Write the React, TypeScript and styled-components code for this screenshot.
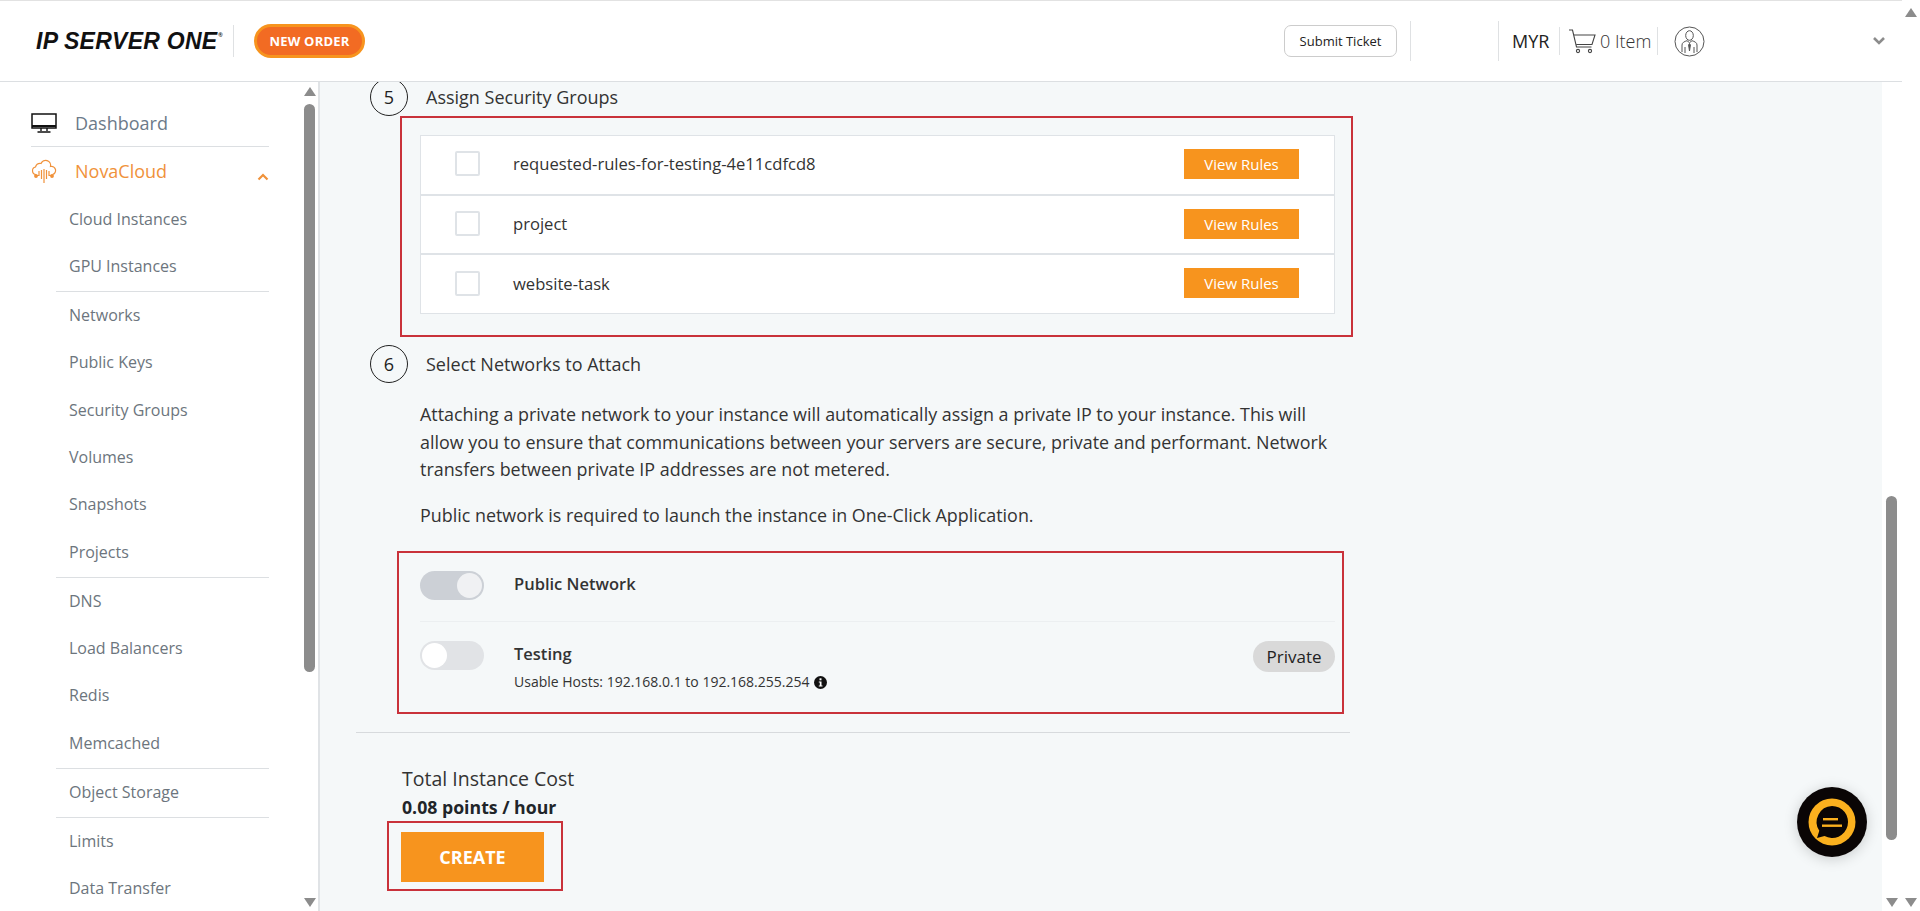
import React from 'react';
import styled, {createGlobalStyle} from 'styled-components';

const Global=createGlobalStyle`
  html,body{margin:0;padding:0;height:100%;overflow:hidden;}
  body{font-family:"Open Sans","Liberation Sans",sans-serif;color:#212529;background:#fff;}
  *{box-sizing:border-box;}
`
const Page=styled.div`
  width:1920px;height:911px;display:flex;overflow:hidden;background:#fff;
`
const Frame=styled.div`
  width:1902px;display:flex;flex-direction:column;
`
const Header=styled.header`
  height:82px;flex:none;display:flex;align-items:center;background:#fff;
  border-top:1px solid #e2e2e2;border-bottom:1px solid #dcdfe2;
  padding-left:36px;
`
const Logo=styled.div`
  width:187px;display:flex;align-items:flex-start;
  font-family:"Liberation Sans",sans-serif;font-weight:700;font-style:italic;
  font-size:23px;line-height:20px;letter-spacing:.25px;color:#111;white-space:nowrap;
  >sup{font-size:6px;line-height:8px;margin:0 0 0 1px;font-style:normal;}
`
const HeadSep=styled.div<{$h:number;$ml:number}>`
  width:1px;height:${p=>p.$h}px;background:#dfe1e3;flex:none;margin-left:${p=>p.$ml}px;
`
const NewOrder=styled.button`
  width:111px;height:34px;margin-left:20px;border:3px solid #f7941e;border-radius:17px;
  background:#f26b23;color:#fff;font:700 13px "Open Sans",sans-serif;padding:0;letter-spacing:.2px;
`
const Spacer=styled.div`flex:1;`
const Ticket=styled.button`
  width:113px;height:32px;border:1px solid #ccc;border-radius:7px;background:#fff;
  color:#222;font:500 13px "Open Sans",sans-serif;padding:0;
`
const Currency=styled.span`
  margin-left:13px;font-size:18px;color:#222;width:47px;
`
const Items=styled.span`
  margin-left:3px;font-size:18px;font-weight:300;color:#333;width:57px;
`
const CartBox=styled.span`
  display:flex;margin-left:8px;
`
const UserBox=styled.span`
  display:flex;margin-left:16px;width:198px;
`
const Chevron=styled.svg`
  width:14px;height:10px;margin-right:16px;flex:none;
`
const Body=styled.div`
  flex:1;display:flex;min-height:0;
`
const Sidebar=styled.aside`
  width:320px;flex:none;display:flex;background:#fff;border-right:2px solid #e0e3e6;overflow:hidden;
`
const Nav=styled.nav`
  width:238px;margin-left:31px;flex:none;padding-top:18px;
`
const TopItem=styled.div<{$active?:boolean}>`
  height:47px;display:flex;align-items:center;font-size:18px;
  color:${p=>p.$active?'#f0923b':'#6c7a89'};
  border-bottom:${p=>p.$active?'none':'1px solid #dcdfe2'};
  >svg{flex:none;width:26px;}
  >span{margin-left:18px;flex:1;}
`
const Caret=styled.svg`
  &&{width:12px;height:8px;margin:12px 0 0 0;}
`
const SubList=styled.ul`
  list-style:none;margin:0;padding:1.5px 0 0 25px;
`
const SubItem=styled.li<{$line?:boolean}>`
  height:${p=>p.$line?48.9:47.4}px;padding-left:13px;line-height:47.4px;font-size:16px;color:#6c757d;
  ${p=>p.$line?'border-bottom:1px solid #dcdfe2;':''}
`
const Rail=styled.div`
  width:18px;flex:none;display:flex;flex-direction:column;align-items:center;padding:8px 0 4px;
`
const SideRail=styled(Rail)`
  width:13px;margin-left:34px;padding:5px 0 4px;
`
const MainRail=styled(Rail)`
  width:20px;padding:0 0 4px 4px;align-items:flex-start;
`
const Thumb=styled.div<{$h:number;$mt:number}>`
  width:11px;height:${p=>p.$h}px;margin:${p=>p.$mt}px 0 0 0;background:#8c8c8c;border-radius:6px;flex:none;
`
const ArrowUp=styled.div`
  width:0;height:0;flex:none;border-left:6px solid transparent;border-right:6px solid transparent;border-bottom:9px solid #8c8c8c;
`
const ArrowDown=styled.div`
  width:0;height:0;flex:none;border-left:6px solid transparent;border-right:6px solid transparent;border-top:9px solid #8c8c8c;
`
const PushDown=styled.div`flex:1;`
const Main=styled.main`
  flex:1;background:#f5f8f9;overflow:hidden;display:flex;flex-direction:column;padding-left:36px;position:relative;
`
const Column=styled.div`
  width:994px;margin-top:-4px;display:flex;flex-direction:column;
`
const StepHead=styled.div`
  display:flex;align-items:center;margin-left:14px;height:38px;
`
const StepNum=styled.div`
  width:38px;height:38px;border:1px solid #222;border-radius:50%;display:flex;align-items:center;justify-content:center;
  font-size:18px;color:#222;flex:none;
`
const StepTitle=styled.h3`
  margin:0 0 0 18px;font-size:18px;font-weight:400;color:#333;
`
const Marked=styled.div`
  border:2px solid #c9323b;
`
const GroupsBox=styled(Marked)`
  width:953px;height:221px;margin:0 0 0 44px;padding:17px 18px 0 18px;
`
const GroupList=styled.div`
  width:915px;height:179px;background:#fff;border:1px solid #dfe3e7;display:flex;flex-direction:column;
`
const GroupRow=styled.div`
  flex:1;display:flex;align-items:center;padding:0 35px 2px 34px;border-bottom:2px solid #dfe3e7;
  &:last-child{border-bottom:none;}
`
const Check=styled.span`
  width:25px;height:25px;flex:none;background:#fff;border:2px solid #dfe3e7;border-radius:2px;
`
const GroupName=styled.span`
  flex:1;margin-left:33px;font-size:16.6px;color:#333;
`
const RulesBtn=styled.button`
  width:115px;height:30px;background:#f7941e;border:none;color:#fff;font:400 15px "Open Sans",sans-serif;padding:0;
`
const Section6=styled(StepHead)`
  margin-top:8px;
`
const Para=styled.p`
  margin:0 0 0 64px;width:920px;font-size:17.9px;line-height:27.5px;color:#333;
`
const Intro=styled(Para)`
  margin-top:18px;
`
const Note=styled(Para)`
  margin-top:18px;
`
const NetworkBox=styled(Marked)`
  width:947px;height:163px;margin:22px 0 0 41px;padding:0 7px 0 21px;display:flex;flex-direction:column;
`
const NetRow=styled.div<{$first?:boolean}>`
  height:${p=>p.$first?69:90}px;flex:none;display:flex;align-items:flex-start;padding-top:${p=>p.$first?18:19}px;
  ${p=>p.$first?'border-bottom:1px solid #eceff1;':''}
`
const Toggle=styled.div<{$on?:boolean}>`
  width:64px;height:29px;border-radius:15px;padding:2px;flex:none;display:flex;
  background:${p=>p.$on?'#ccd0d6':'#e1e3e6'};
  justify-content:${p=>p.$on?'flex-end':'flex-start'};
  >i{display:block;width:25px;height:25px;border-radius:50%;background:${p=>p.$on?'#f0f1f3':'#fff'};}
`
const NetInfo=styled.div`
  margin-left:30px;flex:1;
`
const NetName=styled.div`
  font-size:16.5px;font-weight:600;line-height:26px;color:#333;
`
const Hosts=styled.div`
  display:flex;align-items:center;gap:4px;font-size:14px;line-height:24px;color:#333;margin-top:3px;
`
const Pill=styled.span`
  width:82px;height:31px;flex:none;border-radius:16px;background:#d9d9d9;display:flex;align-items:center;justify-content:center;
  font-size:17px;font-weight:500;color:#222;
`
const Rule=styled.hr`
  width:994px;height:1px;margin:18px 0 0 0;border:none;background:#d7dadd;
`
const Cost=styled.div`
  margin:32px 0 0 46px;font-size:19.5px;line-height:28px;color:#333;
`
const Price=styled.div`
  margin-left:46px;font-size:17.7px;font-weight:700;line-height:28px;color:#212529;
`
const CreateBox=styled(Marked)`
  width:176px;height:70px;margin:0 0 0 31px;padding:9px 12px;
`
const CreateBtn=styled.button`
  width:143px;height:50px;background:#f7941e;border:none;color:#fff;font:700 18px "Open Sans",sans-serif;padding:0;
`
const Chat=styled.div`
  position:absolute;right:15px;bottom:54px;width:70px;height:70px;border-radius:50%;background:#0a0505;
  box-shadow:0 2px 14px rgba(0,0,0,.18);display:flex;align-items:center;justify-content:center;
`

const subs:[string,boolean?][]=[
  ['Cloud Instances'],['GPU Instances',true],['Networks'],['Public Keys'],['Security Groups'],['Volumes'],
  ['Snapshots'],['Projects',true],['DNS'],['Load Balancers'],['Redis'],['Memcached',true],
  ['Object Storage',true],['Limits'],['Data Transfer']
]
const groups=['requested-rules-for-testing-4e11cdfcd8','project','website-task']

function App() {
  return (
    <Page>
      <Global/>
      <Frame>
        <Header>
          <Logo>IP SERVER ONE<sup>®</sup></Logo>
          <HeadSep $h={32} $ml={10}/>
          <NewOrder>NEW ORDER</NewOrder>
          <Spacer/>
          <Ticket>Submit Ticket</Ticket>
          <HeadSep $h={40} $ml={13}/>
          <HeadSep $h={40} $ml={87}/>
          <Currency>MYR</Currency>
          <HeadSep $h={28} $ml={0}/>
          <CartBox>
            <svg width="29" height="28" viewBox="0 0 29 28" fill="none" stroke="#444" strokeWidth="1.1">
              <path d="M1 3h3.500l4 17h15"/>
              <path d="M6 8h21l-3 9.500H8.200"/>
              <circle cx="10" cy="24" r="1.600"/>
              <circle cx="22" cy="24" r="1.600"/>
            </svg>
          </CartBox>
          <Items>0 Item</Items>
          <HeadSep $h={28} $ml={0}/>
          <UserBox>
            <svg width="31" height="31" viewBox="0 0 31 31" fill="none" stroke="#555" strokeWidth="1">
              <circle cx="15.500" cy="15.500" r="14.500"/>
              <ellipse cx="15.500" cy="9.500" rx="3.800" ry="4.800"/>
              <path d="M8 26v-7c0-2.500 2.500-3.500 5-4.300l2.500 2 2.500-2c2.500.8 5 1.800 5 4.300v7"/>
              <path d="M11 27v-6M20 27v-6"/>
              <path d="M15.500 17.500l-.9 1.500.9 6 .9-6z" fill="#555"/>
            </svg>
          </UserBox>
          <Chevron viewBox="0 0 14 10"><path d="M2 2l5 5 5-5" fill="none" stroke="#8c8c8c" strokeWidth="2.600"/></Chevron>
        </Header>
        <Body>
          <Sidebar>
            <Nav>
              <TopItem>
                <svg height="20" viewBox="0 0 26 20" fill="none" stroke="#111">
                  <rect x="1" y="1" width="24" height="14" strokeWidth="1.500"/>
                  <path d="M1 13h24" strokeWidth="2"/>
                  <path d="M10 15v3M16 15v3M6.500 19h13" strokeWidth="1.400"/>
                </svg>
                <span>Dashboard</span>
              </TopItem>
              <TopItem $active>
                <svg height="26" viewBox="0 0 26 26" fill="none" stroke="#f0923b" strokeWidth="1.200">
                  <path d="M5 16.500A3.800 3.800 0 0 1 4.500 9 5 5 0 0 1 10 5.500a5 5 0 0 1 9.500 3 4 4 0 0 1 2 8"/>
                  <path d="M13 11v14M10.500 12v9M15.500 12v9M8 13v4.500H6M18 13v4.500h2"/>
                  <circle cx="5" cy="18" r="1.300" fill="#f0923b"/>
                  <circle cx="21" cy="18" r="1.300" fill="#f0923b"/>
                </svg>
                <span>NovaCloud</span>
                <Caret viewBox="0 0 12 8">
                  <path d="M1.500 6.500L6 2l4.500 4.500" fill="none" stroke="#f0923b" strokeWidth="2.200"/>
                </Caret>
              </TopItem>
              <SubList>
                {subs.map(([name,line])=>
                  <SubItem key={name} $line={line}>{name}</SubItem>
                )}
              </SubList>
            </Nav>
            <SideRail>
              <ArrowUp/>
              <Thumb $h={568} $mt={8}/>
              <PushDown/>
              <ArrowDown/>
            </SideRail>
          </Sidebar>
          <Main>
            <Column>
              <StepHead>
                <StepNum>5</StepNum>
                <StepTitle>Assign Security Groups</StepTitle>
              </StepHead>
              <GroupsBox>
                <GroupList>
                  {groups.map(g=>
                    <GroupRow key={g}>
                      <Check/>
                      <GroupName>{g}</GroupName>
                      <RulesBtn>View Rules</RulesBtn>
                    </GroupRow>
                  )}
                </GroupList>
              </GroupsBox>
              <Section6>
                <StepNum>6</StepNum>
                <StepTitle>Select Networks to Attach</StepTitle>
              </Section6>
              <Intro>Attaching a private network to your instance will automatically assign a private IP to your instance. This will allow you to ensure that communications between your servers are secure, private and performant. Network transfers between private IP addresses are not metered.</Intro>
              <Note>Public network is required to launch the instance in One-Click Application.</Note>
              <NetworkBox>
                <NetRow $first>
                  <Toggle $on><i/></Toggle>
                  <NetInfo><NetName>Public Network</NetName></NetInfo>
                </NetRow>
                <NetRow>
                  <Toggle><i/></Toggle>
                  <NetInfo>
                    <NetName>Testing</NetName>
                    <Hosts>
                      Usable Hosts: 192.168.0.1 to 192.168.255.254
                      <svg width="13" height="13" viewBox="0 0 13 13">
                        <circle cx="6.500" cy="6.500" r="6.500" fill="#111"/>
                        <rect x="5.500" y="2.300" width="2" height="2" fill="#fff"/>
                        <path d="M4.800 5.500h2.700v4h1v1H4.800v-1h1V6.500h-1z" fill="#fff"/>
                      </svg>
                    </Hosts>
                  </NetInfo>
                  <Pill>Private</Pill>
                </NetRow>
              </NetworkBox>
              <Rule/>
              <Cost>Total Instance Cost</Cost>
              <Price>0.08 points / hour</Price>
              <CreateBox><CreateBtn>CREATE</CreateBtn></CreateBox>
            </Column>
            <Chat>
              <svg width="48" height="48" viewBox="0 0 48 48">
                <circle cx="24" cy="24" r="23.500" fill="#fbb01e"/>
                <path d="M24 8a16 16 0 1 1-7.500 30.100L9 40l2.300-7.200A16 16 0 0 1 24 8z" fill="#0a0505"/>
                <rect x="15" y="20" width="15" height="2.400" fill="#fbb01e"/>
                <rect x="14" y="26.500" width="20" height="2.400" fill="#fbb01e"/>
              </svg>
            </Chat>
          </Main>
          <MainRail>
            <Thumb $h={344} $mt={414}/>
            <PushDown/>
            <ArrowDown/>
          </MainRail>
        </Body>
      </Frame>
      <Rail>
        <ArrowUp/>
        <PushDown/>
        <ArrowDown/>
      </Rail>
    </Page>
  );
}
export default App
